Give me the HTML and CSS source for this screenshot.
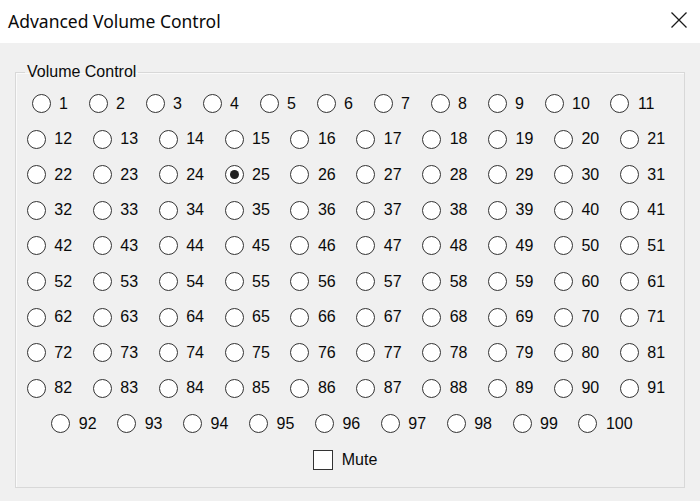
FILE: index.html
```html
<!DOCTYPE html>
<html>
<head>
<meta charset="utf-8">
<link rel="stylesheet" href="styles.css">
</head>
<body>
<div class="window">
  <div class="titlebar">
    <span class="title">Advanced Volume Control</span>
    <svg class="close" width="16" height="16" viewBox="0 0 16 16"><path d="M0.5 0.5 L15.5 15.5 M15.5 0.5 L0.5 15.5" stroke="#1a1a1a" stroke-width="1.3" fill="none"/></svg>
  </div>
  <div class="content">
    <fieldset class="group">
      <legend class="legend">Volume Control</legend>
      <div class="rows">
        <div class="row row-short">
          <label class="item"><span class="radio"></span><span class="lbl">1</span></label>
          <label class="item"><span class="radio"></span><span class="lbl">2</span></label>
          <label class="item"><span class="radio"></span><span class="lbl">3</span></label>
          <label class="item"><span class="radio"></span><span class="lbl">4</span></label>
          <label class="item"><span class="radio"></span><span class="lbl">5</span></label>
          <label class="item"><span class="radio"></span><span class="lbl">6</span></label>
          <label class="item"><span class="radio"></span><span class="lbl">7</span></label>
          <label class="item"><span class="radio"></span><span class="lbl">8</span></label>
          <label class="item"><span class="radio"></span><span class="lbl">9</span></label>
          <label class="item"><span class="radio"></span><span class="lbl">10</span></label>
          <label class="item"><span class="radio"></span><span class="lbl">11</span></label>
        </div>
        <div class="row">
          <label class="item"><span class="radio"></span><span class="lbl">12</span></label>
          <label class="item"><span class="radio"></span><span class="lbl">13</span></label>
          <label class="item"><span class="radio"></span><span class="lbl">14</span></label>
          <label class="item"><span class="radio"></span><span class="lbl">15</span></label>
          <label class="item"><span class="radio"></span><span class="lbl">16</span></label>
          <label class="item"><span class="radio"></span><span class="lbl">17</span></label>
          <label class="item"><span class="radio"></span><span class="lbl">18</span></label>
          <label class="item"><span class="radio"></span><span class="lbl">19</span></label>
          <label class="item"><span class="radio"></span><span class="lbl">20</span></label>
          <label class="item"><span class="radio"></span><span class="lbl">21</span></label>
        </div>
        <div class="row">
          <label class="item"><span class="radio"></span><span class="lbl">22</span></label>
          <label class="item"><span class="radio"></span><span class="lbl">23</span></label>
          <label class="item"><span class="radio"></span><span class="lbl">24</span></label>
          <label class="item"><span class="radio checked"></span><span class="lbl">25</span></label>
          <label class="item"><span class="radio"></span><span class="lbl">26</span></label>
          <label class="item"><span class="radio"></span><span class="lbl">27</span></label>
          <label class="item"><span class="radio"></span><span class="lbl">28</span></label>
          <label class="item"><span class="radio"></span><span class="lbl">29</span></label>
          <label class="item"><span class="radio"></span><span class="lbl">30</span></label>
          <label class="item"><span class="radio"></span><span class="lbl">31</span></label>
        </div>
        <div class="row">
          <label class="item"><span class="radio"></span><span class="lbl">32</span></label>
          <label class="item"><span class="radio"></span><span class="lbl">33</span></label>
          <label class="item"><span class="radio"></span><span class="lbl">34</span></label>
          <label class="item"><span class="radio"></span><span class="lbl">35</span></label>
          <label class="item"><span class="radio"></span><span class="lbl">36</span></label>
          <label class="item"><span class="radio"></span><span class="lbl">37</span></label>
          <label class="item"><span class="radio"></span><span class="lbl">38</span></label>
          <label class="item"><span class="radio"></span><span class="lbl">39</span></label>
          <label class="item"><span class="radio"></span><span class="lbl">40</span></label>
          <label class="item"><span class="radio"></span><span class="lbl">41</span></label>
        </div>
        <div class="row">
          <label class="item"><span class="radio"></span><span class="lbl">42</span></label>
          <label class="item"><span class="radio"></span><span class="lbl">43</span></label>
          <label class="item"><span class="radio"></span><span class="lbl">44</span></label>
          <label class="item"><span class="radio"></span><span class="lbl">45</span></label>
          <label class="item"><span class="radio"></span><span class="lbl">46</span></label>
          <label class="item"><span class="radio"></span><span class="lbl">47</span></label>
          <label class="item"><span class="radio"></span><span class="lbl">48</span></label>
          <label class="item"><span class="radio"></span><span class="lbl">49</span></label>
          <label class="item"><span class="radio"></span><span class="lbl">50</span></label>
          <label class="item"><span class="radio"></span><span class="lbl">51</span></label>
        </div>
        <div class="row">
          <label class="item"><span class="radio"></span><span class="lbl">52</span></label>
          <label class="item"><span class="radio"></span><span class="lbl">53</span></label>
          <label class="item"><span class="radio"></span><span class="lbl">54</span></label>
          <label class="item"><span class="radio"></span><span class="lbl">55</span></label>
          <label class="item"><span class="radio"></span><span class="lbl">56</span></label>
          <label class="item"><span class="radio"></span><span class="lbl">57</span></label>
          <label class="item"><span class="radio"></span><span class="lbl">58</span></label>
          <label class="item"><span class="radio"></span><span class="lbl">59</span></label>
          <label class="item"><span class="radio"></span><span class="lbl">60</span></label>
          <label class="item"><span class="radio"></span><span class="lbl">61</span></label>
        </div>
        <div class="row">
          <label class="item"><span class="radio"></span><span class="lbl">62</span></label>
          <label class="item"><span class="radio"></span><span class="lbl">63</span></label>
          <label class="item"><span class="radio"></span><span class="lbl">64</span></label>
          <label class="item"><span class="radio"></span><span class="lbl">65</span></label>
          <label class="item"><span class="radio"></span><span class="lbl">66</span></label>
          <label class="item"><span class="radio"></span><span class="lbl">67</span></label>
          <label class="item"><span class="radio"></span><span class="lbl">68</span></label>
          <label class="item"><span class="radio"></span><span class="lbl">69</span></label>
          <label class="item"><span class="radio"></span><span class="lbl">70</span></label>
          <label class="item"><span class="radio"></span><span class="lbl">71</span></label>
        </div>
        <div class="row">
          <label class="item"><span class="radio"></span><span class="lbl">72</span></label>
          <label class="item"><span class="radio"></span><span class="lbl">73</span></label>
          <label class="item"><span class="radio"></span><span class="lbl">74</span></label>
          <label class="item"><span class="radio"></span><span class="lbl">75</span></label>
          <label class="item"><span class="radio"></span><span class="lbl">76</span></label>
          <label class="item"><span class="radio"></span><span class="lbl">77</span></label>
          <label class="item"><span class="radio"></span><span class="lbl">78</span></label>
          <label class="item"><span class="radio"></span><span class="lbl">79</span></label>
          <label class="item"><span class="radio"></span><span class="lbl">80</span></label>
          <label class="item"><span class="radio"></span><span class="lbl">81</span></label>
        </div>
        <div class="row">
          <label class="item"><span class="radio"></span><span class="lbl">82</span></label>
          <label class="item"><span class="radio"></span><span class="lbl">83</span></label>
          <label class="item"><span class="radio"></span><span class="lbl">84</span></label>
          <label class="item"><span class="radio"></span><span class="lbl">85</span></label>
          <label class="item"><span class="radio"></span><span class="lbl">86</span></label>
          <label class="item"><span class="radio"></span><span class="lbl">87</span></label>
          <label class="item"><span class="radio"></span><span class="lbl">88</span></label>
          <label class="item"><span class="radio"></span><span class="lbl">89</span></label>
          <label class="item"><span class="radio"></span><span class="lbl">90</span></label>
          <label class="item"><span class="radio"></span><span class="lbl">91</span></label>
        </div>
        <div class="row row-last">
          <label class="item"><span class="radio"></span><span class="lbl">92</span></label>
          <label class="item"><span class="radio"></span><span class="lbl">93</span></label>
          <label class="item"><span class="radio"></span><span class="lbl">94</span></label>
          <label class="item"><span class="radio"></span><span class="lbl">95</span></label>
          <label class="item"><span class="radio"></span><span class="lbl">96</span></label>
          <label class="item"><span class="radio"></span><span class="lbl">97</span></label>
          <label class="item"><span class="radio"></span><span class="lbl">98</span></label>
          <label class="item"><span class="radio"></span><span class="lbl">99</span></label>
          <label class="item"><span class="radio"></span><span class="lbl">100</span></label>
        </div>
        <div class="row mute-row">
          <label class="item"><span class="checkbox"></span><span class="lbl">Mute</span></label>
        </div>
      </div>
    </fieldset>
  </div>
</div>
</body>
</html>
```

FILE: styles.css
```css
html, body {
  margin: 0;
  padding: 0;
}
body {
  width: 700px;
  height: 501px;
  background: #f0f0f0;
  font-family: "Liberation Sans", Arial, sans-serif;
  color: #0a0a0a;
  overflow: hidden;
}
.window {
  display: flex;
  flex-direction: column;
  height: 501px;
}
.titlebar {
  height: 43px;
  background: #ffffff;
  display: flex;
  align-items: center;
  justify-content: space-between;
  padding: 0 13px 0 8px;
  box-sizing: border-box;
}
.title {
  font-family: "Noto Sans", "Open Sans", sans-serif;
  font-size: 17.5px;
  color: #0a0a0a;
  position: relative;
  top: -1px;
}
.close {
  display: block;
  margin-top: -3px;
}
.content {
  padding: 20px 15px 0 15px;
}
.group {
  margin: 0;
  border: 1px solid #d8d8d8;
  box-shadow: inset 1px 1px 0 #fafafa;
  padding: 5px 0 0 0;
  height: 425px;
  box-sizing: border-box;
  min-width: 0;
}
.legend {
  font-size: 16px;
  line-height: 18px;
  padding: 0 2px;
  margin-left: 9px;
  color: #0a0a0a;
}
.rows {
  display: flex;
  flex-direction: column;
  padding-right: 8px;
}
.row {
  height: 35.56px;
  display: flex;
  align-items: center;
  justify-content: center;
}
.row-short {
  padding-right: 6px;
}
.row-last {
  padding-right: 8px;
}
.item {
  display: inline-flex;
  align-items: center;
  gap: 8.5px;
  margin: 0 10.3px;
  font-size: 16px;
  line-height: 20px;
}
.radio {
  width: 19px;
  height: 19px;
  box-sizing: border-box;
  border: 1.5px solid #333;
  border-radius: 50%;
  background: #fff;
  display: flex;
  align-items: center;
  justify-content: center;
}
.radio.checked::after {
  content: "";
  width: 9px;
  height: 9px;
  border-radius: 50%;
  background: #222;
}
.mute-row {
  height: 38px;
}
.mute-row .item {
  gap: 9px;
  position: relative;
  left: -1px;
}
.checkbox {
  width: 20px;
  height: 20px;
  box-sizing: border-box;
  border: 1.5px solid #333;
  background: #fff;
}
```
